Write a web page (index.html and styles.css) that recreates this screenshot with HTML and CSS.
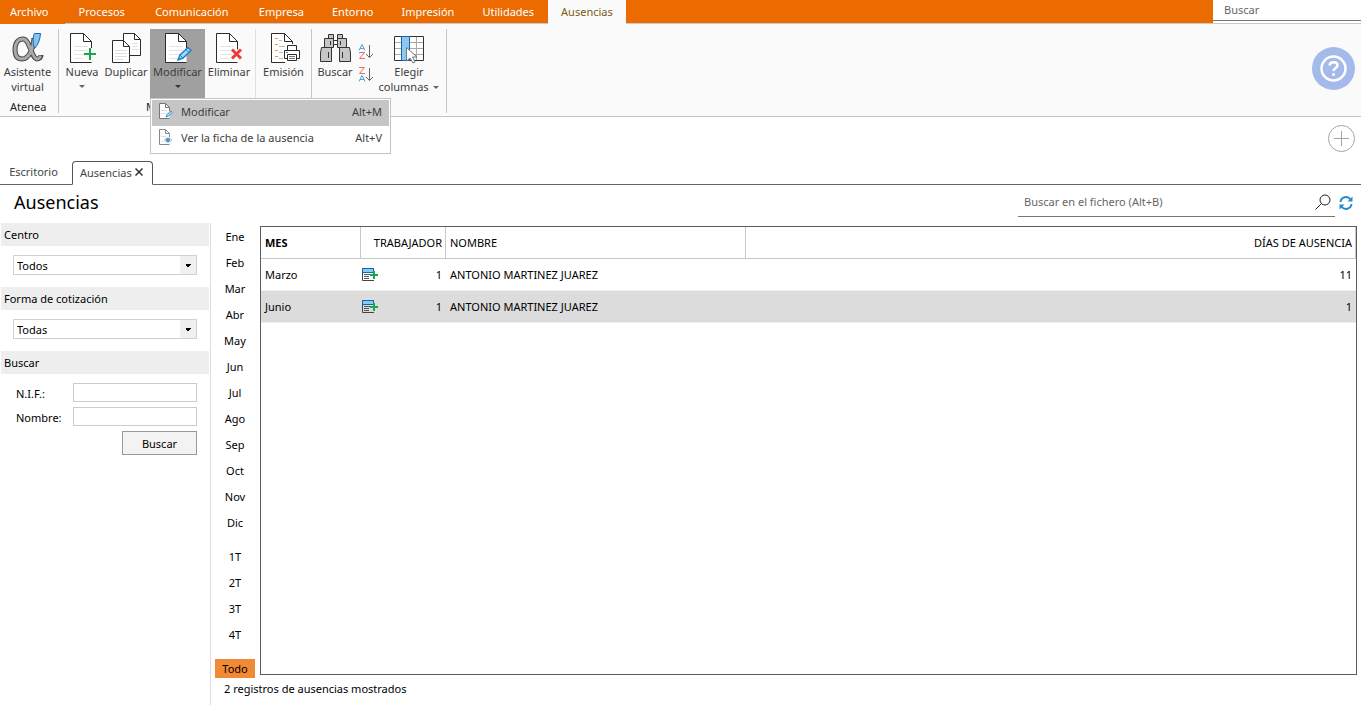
FILE: index.html
```html
<!DOCTYPE html>
<html lang="es">
<head>
<meta charset="utf-8">
<title>Ausencias</title>
<link rel="stylesheet" href="styles.css">
</head>
<body>
<svg class="defs" width="0" height="0" aria-hidden="true">
  <symbol id="page" viewBox="0 0 26 32">
    <path d="M1.5 1.5H14.5L22.5 9.5V30.5H1.5Z" fill="#fff"/>
    <path d="M5 14.5H19M5 18.5H19M5 22.5H19M5 26.5H14" stroke="#e4e4e4"/>
    <path d="M22.5 20V9.5L14.5 1.5H1.5V30.5H22.5M14.5 1.5V9.5H22.5" fill="none" stroke="#2b2b2b"/>
  </symbol>
  <symbol id="record" viewBox="0 0 16 14">
    <path d="M.5 5V12.500H12" fill="none" stroke="#444"/>
    <rect x=".5" y=".5" width="11" height="4" fill="#8fc8ee" stroke="#1267b0"/>
    <path d="M2 6.500H8M2 8.500H7M2 10.500H7" stroke="#555"/>
    <path d="M12 3V11M8 7H16" stroke="#17a84b" stroke-width="2"/>
  </symbol>
</svg>

<header class="topbar">
  <nav class="menu">
    <button class="menu-tab file">Archivo</button>
    <button class="menu-tab">Procesos</button>
    <button class="menu-tab wide">Comunicación</button>
    <button class="menu-tab">Empresa</button>
    <button class="menu-tab">Entorno</button>
    <button class="menu-tab">Impresión</button>
    <button class="menu-tab">Utilidades</button>
    <button class="menu-tab active">Ausencias</button>
  </nav>
  <input class="global-search" type="search" placeholder="Buscar" aria-label="Buscar">
</header>

<section class="ribbon">
  <div class="group atenea">
    <div class="tools">
      <button class="tool assistant">
        <svg width="32" height="32" viewBox="0 0 32 32">
          <path d="M22 6C21 17 17 27 10 27C5 27 3 23 3 17.500C3 11 6 7 11 7C18 7 19 26 25 27C28 27 29 25 29 23" fill="none" stroke="#484848" stroke-width="5"/>
          <path d="M22 7C21 17 17 27 10 27C5 27 3 23 3 17.500C3 11 6 7 11 7C18 7 19 26 25 27C27 27 28 25 29 24" fill="none" stroke="#a9a9a9" stroke-width="3"/>
          <path d="M22.500 1.500H28.500C28 8 26 13 22.500 16.500C20.500 10 21 4 22.500 1.500Z" fill="#82c4f2" stroke="#1768ad"/>
        </svg>
        <span>Asistente<br>virtual</span>
      </button>
    </div>
    <div class="group-name">Atenea</div>
  </div>
  <div class="group upkeep">
    <div class="tools">
      <button class="tool new">
        <svg width="32" height="32" viewBox="0 0 32 32">
          <use href="#page" x="3" width="26" height="32"/>
          <path d="M24 16V28M18 22H30" stroke="#fafafa" stroke-width="4"/>
          <path d="M24 16V28M18 22H30" stroke="#17a84b" stroke-width="2"/>
        </svg>
        <span>Nueva</span><i class="caret"></i>
      </button>
      <button class="tool duplicate">
        <svg width="32" height="32" viewBox="0 0 32 32" fill="none">
          <path d="M13.500 1.500H24.500L30.500 7.500V23.500H13.500Z" fill="#fff" stroke="#2b2b2b"/>
          <path d="M24.500 1.500V7.500H30.500" stroke="#2b2b2b"/>
          <path d="M22 11.500H28M22 14.500H28M22 17.500H28" stroke="#ddd"/>
          <path d="M2.500 8.500H13.500L19.500 14.500V30.500H2.500Z" fill="#fff" stroke="#2b2b2b"/>
          <path d="M13.500 8.500V14.500H19.500" stroke="#2b2b2b"/>
          <path d="M5 18.500H17M5 21.500H17M5 24.500H17M5 27.500H13" stroke="#ddd"/>
        </svg>
        <span>Duplicar</span>
      </button>
      <div class="dropdown">
        <button class="tool modify" aria-expanded="true">
          <svg width="32" height="32" viewBox="0 0 32 32">
            <use href="#page" x="2" width="26" height="32"/>
            <path d="M16 28L18 23L26 15.500L29 18.500L21 26Z" fill="#a9dafa" stroke="#1d81c8" stroke-width="1.500"/>
            <path d="M18 23L21 26M24 17.500L27 20.500" stroke="#1d81c8"/>
          </svg>
          <span>Modificar</span><i class="caret"></i>
        </button>
        <div class="popup" role="menu">
          <button class="popup-item selected" role="menuitem">
            <svg width="16" height="16" viewBox="0 0 16 16" fill="none">
              <path d="M1.500 .5H7.500L11.500 4.500V15.500H1.500Z" fill="#fff"/>
              <path d="M11.500 8V4.500L7.500 .5H1.500V15.500H11.500M7.500 .5V4.500H11.500" stroke="#777"/>
              <path d="M3 7.500H9M3 10.500H8" stroke="#ddd"/>
              <path d="M8 14L9 11.500L13 8L14.500 9.500L10.500 13Z" fill="#a9dafa" stroke="#3a94d2"/>
            </svg>
            <span>Modificar</span><kbd>Alt+M</kbd>
          </button>
          <button class="popup-item" role="menuitem">
            <svg width="16" height="16" viewBox="0 0 16 16" fill="none">
              <path d="M11.500 8V4.500L7.500 .5H1.500V15.500H11.500M7.500 .5V4.500H11.500" stroke="#888"/>
              <path d="M3 7.500H8M3 12.500H5" stroke="#ddd"/>
              <path d="M5.500 11Q10 5 14.500 11Q10 17 5.500 11Z" fill="#c4d3df"/>
              <circle cx="10" cy="11" r="2" fill="#4b90c6"/>
            </svg>
            <span>Ver la ficha de la ausencia</span><kbd>Alt+V</kbd>
          </button>
        </div>
      </div>
      <button class="tool delete">
        <svg width="32" height="32" viewBox="0 0 32 32">
          <use href="#page" x="2" width="26" height="32"/>
          <path d="M19 17.500L28 26.500M28 17.500L19 26.500" stroke="#fafafa" stroke-width="5"/>
          <path d="M19 17.500L28 26.500M28 17.500L19 26.500" stroke="#ee3a3a" stroke-width="3"/>
        </svg>
        <span>Eliminar</span>
      </button>
      <button class="tool print">
        <svg width="32" height="32" viewBox="0 0 32 32" fill="none">
          <path d="M3.500 1.500H16.500L24.500 9.500V30.500H3.500Z" fill="#fff"/>
          <path d="M24.500 12V9.500L16.500 1.500H3.500V30.500H17M16.500 1.500V9.500H24.500" stroke="#2b2b2b"/>
          <path d="M7 6.500H10M7 12.500H10M7 18.500H10M7 24.500H10" stroke="#f39a1f"/>
          <path d="M11 8.500H14M11 14.500H17M11 20.500H15M11 26.500H15" stroke="#bbb"/>
          <path d="M19.500 18V13.500H28.500V18" fill="#fff" stroke="#2b2b2b"/>
          <path d="M16.500 18.500H31.500V26.500H16.500Z" fill="#fff" stroke="#2b2b2b"/>
          <path d="M19.500 22.500H28.500V28.500H19.500Z" fill="#fff" stroke="#2b2b2b"/>
          <path d="M18 20.500H20" stroke="#2b87cf"/><path d="M21 24.500H27M21 26.500H27" stroke="#777"/>
        </svg>
        <span>Emisión</span>
      </button>
    </div>
    <div class="group-name">M</div>
  </div>
  <div class="group view">
    <div class="tools">
      <button class="tool find">
        <svg width="32" height="32" viewBox="0 0 32 32" fill="#c6c6c6" stroke="#333">
          <path d="M9.500 2.500H14.500V7H9.500ZM18.500 2.500H23.500V7H18.500Z"/>
          <path d="M5.500 6.500H14.500V15.500H5.500ZM18.500 6.500H27.500V15.500H18.500Z"/>
          <path d="M14.500 8.500H18.500V12.500H14.500Z" fill="#fff"/>
          <path d="M2.500 15.500H12.500V29.500H1.500V21ZM20.500 15.500H30.500L31.500 21V29.500H20.500Z"/>
          <path d="M11.500 9V13M21.500 9V13M9.500 20V26M23.500 20V26"/>
        </svg>
        <span>Buscar</span>
      </button>
      <div class="sorts">
        <button class="sort" aria-label="Orden ascendente">
          <svg width="16" height="17" viewBox="0 0 16 17" fill="none">
            <path d="M1 7.500L4 1.500L7 7.500M2 5.500H6" stroke="#4ba3da"/>
            <path d="M1 9.500H6.500L1.500 15.500H7" stroke="#ee6a6a"/>
            <path d="M11.500 2V14.500M8 11L11.500 14.500L15 11" stroke="#666"/>
          </svg>
        </button>
        <button class="sort" aria-label="Orden descendente">
          <svg width="16" height="17" viewBox="0 0 16 17" fill="none">
            <path d="M1 1.500H6.500L1.500 7.500H7" stroke="#ee6a6a"/>
            <path d="M1 15.500L4 9.500L7 15.500M2 13.500H6" stroke="#4ba3da"/>
            <path d="M11.500 2V14.500M8 11L11.500 14.500L15 11" stroke="#666"/>
          </svg>
        </button>
      </div>
      <button class="tool columns">
        <svg width="32" height="32" viewBox="0 0 32 32" fill="none">
          <path d="M1.500 4.500H30.500V28.500H1.500Z" fill="#fff"/>
          <path d="M1 10.500H31M1 16.500H31M1 22.500H31M23.500 4V29" stroke="#aaa"/>
          <path d="M1.500 4.500H30.500V28.500H1.500Z" stroke="#333"/>
          <path d="M8.500 4.500H16.500V28.500H8.500Z" fill="#8fc8ee" stroke="#1267b0"/>
          <path d="M13.500 15.500V29L17 26L20 31L22 30L19.500 25H24Z" fill="#fff" stroke="#777"/>
        </svg>
        <span>Elegir<br>columnas <i class="caret inline"></i></span>
      </button>
    </div>
  </div>
  <button class="help" aria-label="Ayuda">
    <svg width="43" height="43" viewBox="0 0 43 43" fill="none" stroke="#fff">
      <circle cx="21.500" cy="21.500" r="21.500" fill="#a4baeb" stroke="none"/>
      <circle cx="21.500" cy="21.500" r="12" stroke-width="2.500"/>
      <path d="M17.500 18.500C18 14 25.500 14.500 25.500 18.500C25.500 21 21.500 21 21.500 24" stroke-width="2.500"/>
      <circle cx="21.500" cy="27.500" r="1.500" fill="#fff" stroke="none"/>
    </svg>
  </button>
</section>

<section class="workspace-tabs">
  <button class="doc-tab">Escritorio</button>
  <div class="doc-tab current">Ausencias
    <button class="close" aria-label="Cerrar"><svg width="8" height="8" viewBox="0 0 8 8"><path d="M.5 .5L7.500 7.500M7.500 .5L.5 7.500" stroke="#333" stroke-width="1.500"/></svg></button>
  </div>
  <button class="add" aria-label="Añadir">
    <svg width="27" height="27" viewBox="0 0 27 27" fill="none" stroke="#a3a3a3"><circle cx="13.500" cy="13.500" r="13"/><path d="M13.500 6V21M6 13.500H21"/></svg>
  </button>
</section>

<section class="heading">
  <h1>Ausencias</h1>
  <div class="file-search">
    <input type="search" placeholder="Buscar en el fichero (Alt+B)" aria-label="Buscar en el fichero">
    <svg width="16" height="16" viewBox="0 0 16 16" fill="none" stroke="#222"><circle cx="10" cy="6" r="5"/><path d="M6.500 9.500L.5 15.500" /></svg>
  </div>
  <button class="refresh" aria-label="Actualizar">
    <svg width="14" height="14" viewBox="0 0 14 14" fill="none" stroke="#258bcb" stroke-width="2"><path d="M1.500 6A5.500 5.500 0 0 1 11.500 3.500M12.500 8A5.500 5.500 0 0 1 2.500 10.500"/><path d="M13.500 .5V5.500H8.500ZM.5 13.500V8.500H5.500Z" fill="#258bcb" stroke="none"/></svg>
  </button>
</section>

<main class="main">
  <aside class="filters">
    <label class="section-title" for="centro">Centro</label>
    <div class="select-row"><select id="centro"><option>Todos</option></select></div>
    <label class="section-title" for="forma">Forma de cotización</label>
    <div class="select-row"><select id="forma"><option>Todas</option></select></div>
    <div class="section-title">Buscar</div>
    <form class="search-form">
      <label for="nif">N.I.F.:</label><input id="nif" type="text">
      <label for="nombre">Nombre:</label><input id="nombre" type="text">
      <button type="button">Buscar</button>
    </form>
  </aside>
  <div class="content">
    <div class="data-row">
      <nav class="months">
        <button>Ene</button><button>Feb</button><button>Mar</button><button>Abr</button>
        <button>May</button><button>Jun</button><button>Jul</button><button>Ago</button>
        <button>Sep</button><button>Oct</button><button>Nov</button><button>Dic</button>
        <button class="first-quarter">1T</button><button>2T</button><button>3T</button><button>4T</button>
        <button class="all">Todo</button>
      </nav>
      <div class="grid">
        <table>
          <colgroup><col class="c-month"><col class="c-worker"><col class="c-name"><col></colgroup>
          <thead><tr><th class="sorted">MES</th><th class="num">TRABAJADOR</th><th>NOMBRE</th><th class="num">DÍAS DE AUSENCIA</th></tr></thead>
          <tbody>
            <tr><td>Marzo</td><td><div class="worker"><svg width="16" height="14"><use href="#record"/></svg>1</div></td><td>ANTONIO MARTINEZ JUAREZ</td><td class="num">11</td></tr>
            <tr class="current-row"><td>Junio</td><td><div class="worker"><svg width="16" height="14"><use href="#record"/></svg>1</div></td><td>ANTONIO MARTINEZ JUAREZ</td><td class="num">1</td></tr>
          </tbody>
        </table>
      </div>
    </div>
    <p class="status">2 registros de ausencias mostrados</p>
  </div>
</main>
</body>
</html>
```

FILE: styles.css
```css
* { box-sizing: border-box; }
body {
  margin: 0;
  min-height: 100vh;
  display: flex;
  flex-direction: column;
  background: #fff;
  color: #000;
  font: 11px/15px "Noto Sans", "Open Sans", sans-serif;
}
button, input, select { font: inherit; color: inherit; }
button { border: 0; padding: 0; background: none; }
svg { display: block; flex: none; }
.defs { position: absolute; }

/* Top menu */
.topbar { position: relative; z-index: 1; display: flex; height: 23px; background: #eb6b00; }
.menu { flex: 1; display: flex; }
.menu-tab {
  height: 24px;
  padding: 0 14px;
  color: #fff;
  border-bottom: 1px solid #c9c9c9;
}
.menu-tab.file { padding: 0 16px 0 10px; border-color: #eb6b00; }
.menu-tab.wide { min-width: 106px; }
.menu-tab.active { padding: 0 13px; background: #fafafa; color: #7b5c14; border-color: #fafafa; }
.global-search {
  width: 148px;
  height: 21px;
  padding: 0 11px 2px;
  border: 0;
  border-bottom: 1px solid #777;
  background: #fff;
  box-shadow: 0 2px #fff;
}
::placeholder { color: #666; opacity: 1; }

/* Ribbon */
.ribbon {
  display: flex;
  height: 94px;
  padding-top: 5px;
  background: #fafafa;
  border-top: 1px solid #c9c9c9;
  border-bottom: 1px solid #c4c4c4;
  color: #3d3d3d;
}
.group { display: flex; flex-direction: column; height: 84px; border-right: 1px solid #c6c6c6; }
.atenea { width: 59px; }
.upkeep { width: 253px; }
.view { width: 135px; }
.tools { display: flex; height: 71px; }
.group-name { color: #222; }
.atenea .group-name { padding-left: 10px; }
.upkeep .group-name { padding-left: 87px; }
.tool { display: flex; flex-direction: column; align-items: center; padding-top: 3px; height: 70px; }
.assistant { width: 55px; }
.new { width: 46px; }
.duplicate { width: 42px; margin-right: 3px; }
.modify { width: 55px; background: #a0a0a0; }
.delete { width: 51px; padding-right: 2px; border-right: 1px solid #e0e0e0; }
.print { width: 55px; }
.find { width: 46px; }
.columns { width: 62px; }
.caret { border: 3px solid transparent; border-top-color: #666; border-bottom: 0; margin-top: 6px; }
.modify .caret { border-top-color: #333; }
.caret.inline { display: inline-block; margin: 0 0 2px 2px; }
.sorts { display: flex; flex-direction: column; gap: 6px; width: 20px; padding-top: 14px; }
.dropdown { position: relative; }
.popup {
  position: absolute;
  z-index: 2;
  top: 69px;
  left: 0;
  width: 241px;
  padding: 1px;
  background: #fff;
  border: 1px solid #c4c4c4;
}
.popup-item { display: flex; align-items: center; gap: 7px; width: 100%; height: 26px; padding: 0 7px 4px 6px; }
.popup-item kbd { margin-left: auto; font: inherit; }
.popup-item.selected { background: #c5c5c5; }
.help { margin: 18px 6px 0 auto; align-self: flex-start; }

/* Document tabs */
.workspace-tabs { display: flex; align-items: flex-end; height: 68px; border-bottom: 1px solid #666; color: #444; }
.doc-tab { width: 72px; height: 24px; padding: 0 5px 2px 0; text-align: center; }
.doc-tab.current {
  display: flex;
  align-items: center;
  justify-content: space-between;
  width: 81px;
  margin-bottom: -1px;
  padding: 0 9px 2px 7px;
  border: 1px solid #555;
  border-bottom-color: #fff;
  border-radius: 4px 4px 0 0;
  background: #fff;
}
.add { margin: 8px 6px 0 auto; align-self: flex-start; }

/* Heading */
.heading { display: flex; align-items: flex-start; height: 38px; padding-right: 8px; }
h1 { margin: 5px 0 0 14px; font-size: 18px; line-height: 24px; font-weight: 400; }
.file-search { display: flex; align-items: center; width: 317px; height: 32px; margin-left: auto; padding: 2px 4px 0 6px; border-bottom: 1px solid #777; }
.file-search input { flex: 1; min-width: 0; padding: 0; border: 0; }
.refresh { margin: 11px 0 0 4px; }

/* Filters */
.main { flex: 1; display: flex; }
.filters { width: 211px; padding: 0 1px; border-right: 1px solid #dcdcdc; }
.section-title { display: block; height: 23px; padding: 4px 3px; background: #eee; }
.select-row { padding: 9px 12px 12px; display: flex; }
select {
  flex: 1;
  height: 20px;
  padding: 0 3px;
  appearance: none;
  border: 1px solid #d0d0d0;
  border-radius: 0;
  background:
    conic-gradient(from 315deg at 50% 100%, #000 90deg, transparent 0) right 5px center / 6px 3px no-repeat,
    linear-gradient(#f0f0f0, #f0f0f0) right / 16px 100% no-repeat,
    #fff;
}
.search-form { display: grid; grid-template-columns: 57px 1fr; gap: 5px 0; padding: 9px 12px 0 15px; align-items: center; }
.search-form label { padding-top: 2px; }
.search-form input { width: 100%; height: 19px; border: 1px solid #ccc; }
.search-form button { grid-column: 2; justify-self: end; width: 75px; height: 24px; border: 1px solid #999; background: #f3f3f3; }

/* Months and grid */
.content { flex: 1; display: flex; flex-direction: column; }
.data-row { flex: 1; display: flex; padding-right: 4px; }
.months { display: flex; flex-direction: column; width: 49px; padding: 0 5px 0 4px; }
.months button { height: 26px; }
.months .first-quarter { margin-top: 8px; }
.months .all { margin-top: 12px; height: 19px; background: #f08a35; }
.grid { flex: 1; margin: 3px 0; border: 1px solid #5c5c5c; }
table { width: 100%; table-layout: fixed; border-collapse: separate; border-spacing: 0; }
.c-month { width: 100px; }
.c-worker { width: 85px; }
.c-name { width: 300px; }
th, td { height: 32px; padding: 0 4px; text-align: left; font-weight: 400; }
th { border-right: 1px solid #c8c8c8; border-bottom: 1px solid #c8c8c8; white-space: nowrap; }
th.num { padding-right: 3px; }
.sorted { font-weight: 700; }
.num { text-align: right; }
td { border-bottom: 1px solid #eee; }
td:nth-child(2) { padding-left: 1px; }
.current-row { background: #dcdcdc; }
.worker { display: flex; align-items: center; justify-content: space-between; }
.status { margin: 0; padding: 3px 0 9px 13px; }
```
